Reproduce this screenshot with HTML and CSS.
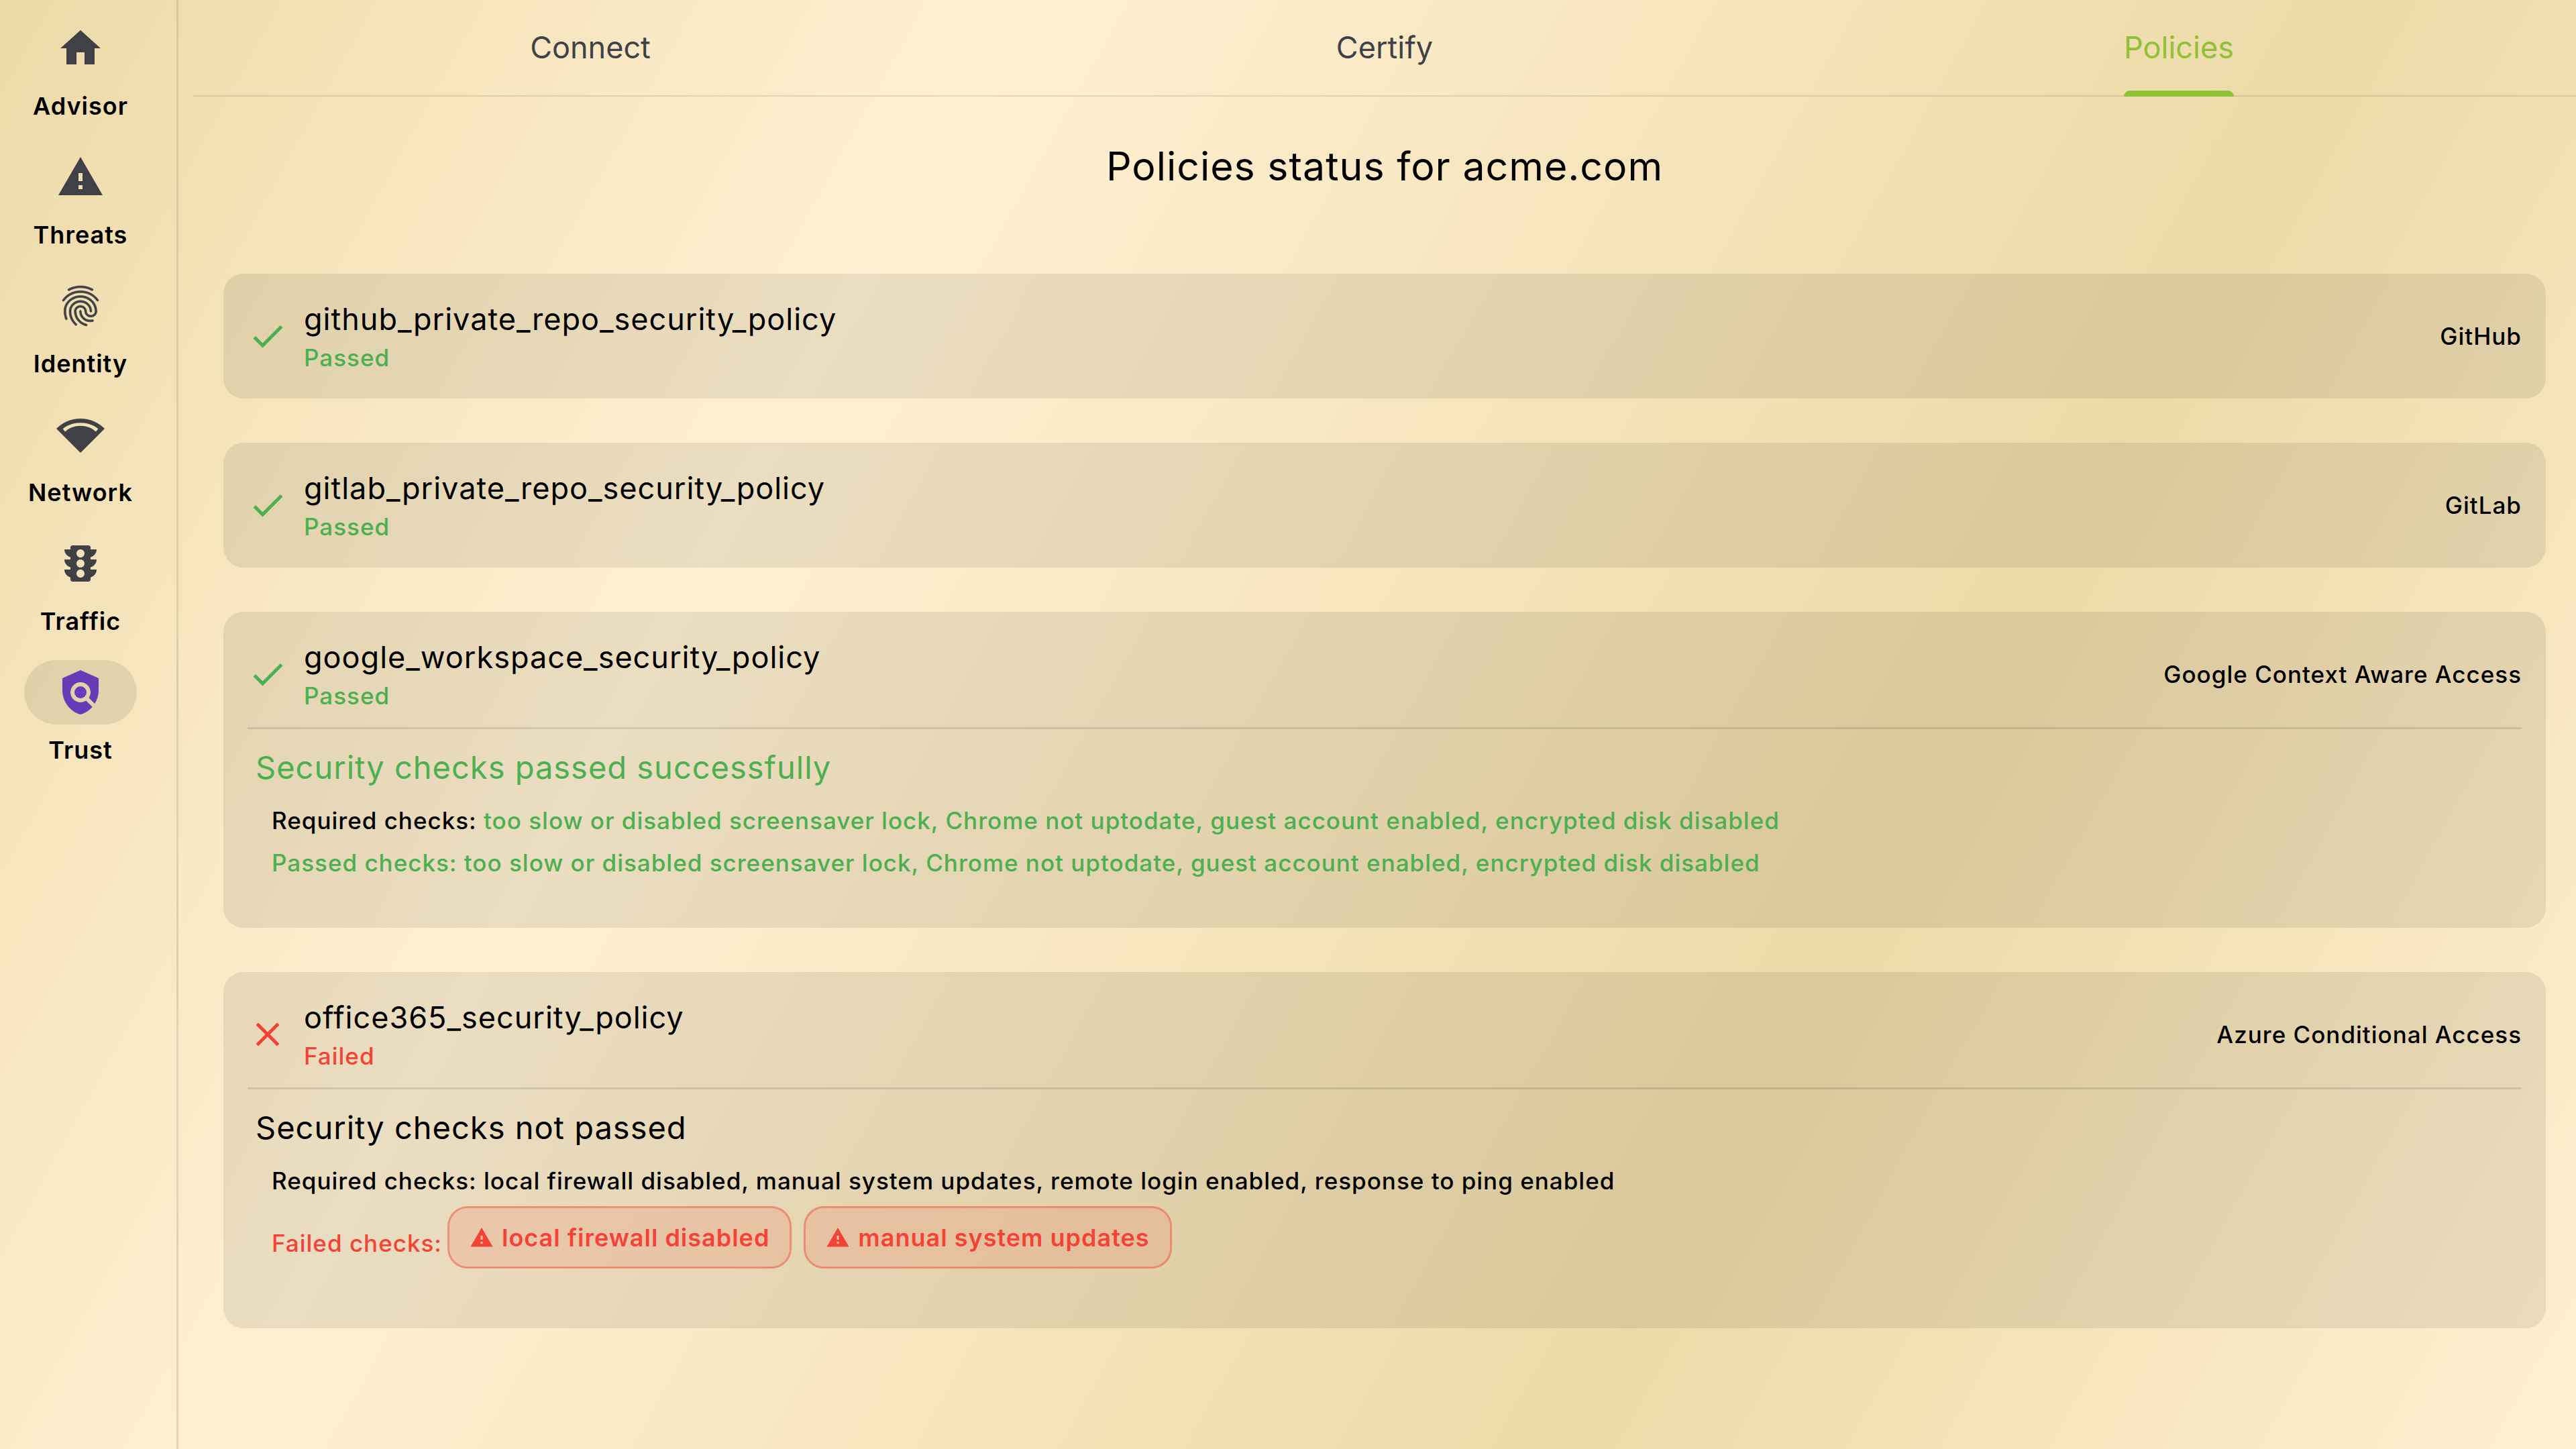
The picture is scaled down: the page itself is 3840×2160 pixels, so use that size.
FILE: index.html
```html
<!DOCTYPE html>
<html lang="en">
<head>
<meta charset="utf-8">
<title>Policies status</title>
<meta name="viewport" content="width=device-width, initial-scale=1">
<link rel="stylesheet" href="styles.css">
</head>
<body>
<svg class="sprite" aria-hidden="true">
  <symbol id="icon-check" viewBox="0 0 24 24"><path d="M9 16.17L4.83 12l-1.42 1.41L9 19 21 7l-1.41-1.41z"/></symbol>
  <symbol id="icon-close" viewBox="0 0 24 24"><path d="M19 6.41L17.59 5 12 10.59 6.41 5 5 6.41 10.59 12 5 17.59 6.41 19 12 13.41 17.59 19 19 17.59 13.41 12z"/></symbol>
  <symbol id="icon-warning" viewBox="0 0 24 24"><path d="M1 21h22L12 2 1 21zm12-3h-2v-2h2v2zm0-4h-2v-4h2v4z"/></symbol>
</svg>
<div class="app">
  <nav class="rail" aria-label="Main">
    <a class="rail-item" href="#advisor">
      <span class="rail-pill"><svg class="rail-icon" viewBox="0 0 24 24"><path d="M10 20v-6h4v6h5v-8h3L12 3 2 12h3v8z"/></svg></span>
      <span class="rail-label">Advisor</span>
    </a>
    <a class="rail-item" href="#threats">
      <span class="rail-pill"><svg class="rail-icon"><use href="#icon-warning"/></svg></span>
      <span class="rail-label">Threats</span>
    </a>
    <a class="rail-item" href="#identity">
      <span class="rail-pill"><svg class="rail-icon rail-icon-heavy" viewBox="0 0 24 24"><path d="M17.81 4.47c-.08 0-.16-.02-.23-.06C15.66 3.42 14 3 12.01 3c-1.98 0-3.86.47-5.57 1.41-.24.13-.54.04-.68-.2-.13-.24-.04-.55.2-.68C7.82 2.52 9.86 2 12.01 2c2.13 0 3.99.47 6.03 1.52.25.13.34.43.21.67-.09.18-.26.28-.44.28zM3.5 9.72c-.1 0-.2-.03-.29-.09-.23-.16-.28-.47-.12-.7.99-1.4 2.25-2.5 3.75-3.27C9.98 4.04 14 4.03 17.15 5.65c1.5.77 2.76 1.86 3.75 3.25.16.22.11.54-.12.7-.23.16-.54.11-.7-.12-.9-1.26-2.04-2.25-3.39-2.94-2.87-1.47-6.54-1.47-9.4.01-1.36.7-2.5 1.7-3.4 2.96-.08.14-.23.21-.39.21zm6.25 12.07c-.13 0-.26-.05-.35-.15-.87-.87-1.34-1.43-2.01-2.64-.69-1.23-1.05-2.73-1.05-4.34 0-2.97 2.54-5.39 5.66-5.39s5.66 2.42 5.66 5.39c0 .28-.22.5-.5.5s-.5-.22-.5-.5c0-2.42-2.09-4.39-4.66-4.39-2.57 0-4.66 1.97-4.66 4.39 0 1.44.32 2.77.93 3.85.64 1.15 1.08 1.64 1.85 2.42.19.2.19.51 0 .71-.11.1-.24.15-.37.15zm7.17-1.85c-1.19 0-2.24-.3-3.1-.89-1.49-1.01-2.38-2.65-2.38-4.39 0-.28.22-.5.5-.5s.5.22.5.5c0 1.41.72 2.74 1.94 3.56.71.48 1.54.71 2.54.71.24 0 .64-.03 1.04-.1.27-.05.53.13.58.41.05.27-.13.53-.41.58-.57.11-1.07.12-1.21.12zM14.91 22c-.04 0-.09-.01-.13-.02-1.59-.44-2.63-1.03-3.72-2.1-1.4-1.39-2.17-3.24-2.17-5.22 0-1.62 1.38-2.94 3.08-2.94 1.7 0 3.08 1.32 3.08 2.94 0 1.07.93 1.94 2.08 1.94s2.08-.87 2.08-1.94c0-3.77-3.25-6.83-7.25-6.83-2.84 0-5.44 1.58-6.61 4.03-.39.81-.59 1.76-.59 2.8 0 .78.07 2.01.67 3.61.1.26-.03.55-.29.64-.26.1-.55-.04-.64-.29-.49-1.31-.73-2.61-.73-3.96 0-1.2.23-2.29.68-3.24 1.33-2.79 4.28-4.6 7.51-4.6 4.55 0 8.25 3.51 8.25 7.83 0 1.62-1.38 2.94-3.08 2.94s-3.08-1.32-3.08-2.94c0-1.07-.93-1.94-2.08-1.94s-2.08.87-2.08 1.94c0 1.71.66 3.31 1.87 4.51.95.94 1.86 1.46 3.27 1.85.27.07.42.35.35.61-.05.23-.26.38-.47.38z"/></svg></span>
      <span class="rail-label">Identity</span>
    </a>
    <a class="rail-item" href="#network">
      <span class="rail-pill"><svg class="rail-icon" viewBox="0 0 24 24"><path fill-rule="evenodd" d="M12 4C7.31 4 3.07 5.9 0 8.98L12 21 24 8.98C20.93 5.9 16.69 4 12 4zM3.2 9.07C5.71 7.08 8.67 6.1 12 6.1s6.29.98 8.8 2.97l-1.15 1.43C17.5 8.54 14.86 7.6 12 7.600s-5.5.94-7.65 2.900z"/></svg></span>
      <span class="rail-label">Network</span>
    </a>
    <a class="rail-item" href="#traffic">
      <span class="rail-pill"><svg class="rail-icon" viewBox="0 0 24 24"><path d="M20 10h-3V8.860c1.720-.45 3-2 3-3.860h-3V4c0-.55-.45-1-1-1H8c-.55 0-1 .45-1 1v1H4c0 1.860 1.280 3.410 3 3.860V10H4c0 1.860 1.280 3.410 3 3.860V15H4c0 1.860 1.280 3.410 3 3.860V20c0 .55.45 1 1 1h8c.55 0 1-.45 1-1v-1.140c1.720-.45 3-2 3-3.860h-3v-1.140c1.720-.45 3-2 3-3.860zm-8 9c-1.110 0-2-.9-2-2s.89-2 2-2c1.100 0 2 .9 2 2s-.89 2-2 2zm0-5c-1.110 0-2-.9-2-2s.89-2 2-2c1.100 0 2 .9 2 2s-.89 2-2 2zm0-5c-1.110 0-2-.9-2-2 0-1.110.89-2 2-2 1.100 0 2 .89 2 2 0 1.100-.89 2-2 2z"/></svg></span>
      <span class="rail-label">Traffic</span>
    </a>
    <a class="rail-item is-active" href="#trust" aria-current="page">
      <span class="rail-pill"><svg class="rail-icon" viewBox="0 0 24 24"><path d="M21 5l-9-4-9 4v6c0 5.550 3.840 10.740 9 12 2.300-.56 4.330-1.900 5.880-3.710l-3.120-3.120c-1.940 1.290-4.580 1.070-6.290-.64-1.950-1.950-1.950-5.120 0-7.070 1.950-1.950 5.120-1.950 7.070 0 1.710 1.710 1.920 4.350.64 6.290l2.900 2.900C20.290 15.690 21 13.380 21 11V5z"/><circle cx="12" cy="12" r="3"/></svg></span>
      <span class="rail-label">Trust</span>
    </a>
  </nav>
  <main class="content">
    <div class="tabs" role="tablist">
      <button class="tab" type="button" role="tab" aria-selected="false"><span class="tab-label">Connect</span></button>
      <button class="tab" type="button" role="tab" aria-selected="false"><span class="tab-label">Certify</span></button>
      <button class="tab is-selected" type="button" role="tab" aria-selected="true"><span class="tab-label">Policies</span></button>
    </div>
    <h1 class="title">Policies status for acme.com</h1>
    <div class="cards">
      <article class="card">
        <header class="card-head">
          <svg class="status-icon passed"><use href="#icon-check"/></svg>
          <div class="card-text">
            <h2 class="card-name">github_private_repo_security_policy</h2>
            <p class="card-status passed">Passed</p>
          </div>
          <span class="provider">GitHub</span>
        </header>
      </article>
      <article class="card">
        <header class="card-head">
          <svg class="status-icon passed"><use href="#icon-check"/></svg>
          <div class="card-text">
            <h2 class="card-name">gitlab_private_repo_security_policy</h2>
            <p class="card-status passed">Passed</p>
          </div>
          <span class="provider">GitLab</span>
        </header>
      </article>
      <article class="card">
        <header class="card-head">
          <svg class="status-icon passed"><use href="#icon-check"/></svg>
          <div class="card-text">
            <h2 class="card-name">google_workspace_security_policy</h2>
            <p class="card-status passed">Passed</p>
          </div>
          <span class="provider">Google Context Aware Access</span>
        </header>
        <div class="details">
          <h3 class="details-title passed">Security checks passed successfully</h3>
          <p class="checks">Required checks: <span class="passed">too slow or disabled screensaver lock, Chrome not uptodate, guest account enabled, encrypted disk disabled</span></p>
          <p class="checks passed">Passed checks: too slow or disabled screensaver lock, Chrome not uptodate, guest account enabled, encrypted disk disabled</p>
        </div>
      </article>
      <article class="card">
        <header class="card-head">
          <svg class="status-icon failed"><use href="#icon-close"/></svg>
          <div class="card-text">
            <h2 class="card-name">office365_security_policy</h2>
            <p class="card-status failed">Failed</p>
          </div>
          <span class="provider">Azure Conditional Access</span>
        </header>
        <div class="details">
          <h3 class="details-title">Security checks not passed</h3>
          <p class="checks">Required checks: local firewall disabled, manual system updates, remote login enabled, response to ping enabled</p>
          <div class="failed-row failed">
            <span class="failed-label">Failed checks:</span>
            <div class="chips">
              <button class="chip" type="button"><svg class="chip-icon"><use href="#icon-warning"/></svg>local firewall disabled</button>
              <button class="chip" type="button"><svg class="chip-icon"><use href="#icon-warning"/></svg>manual system updates</button>
            </div>
          </div>
        </div>
      </article>
    </div>
  </main>
</div>
</body>
</html>
```
FILE: styles.css
```css
* {
  box-sizing: border-box;
}

body {
  margin: 0;
  font-family: Inter, "Liberation Sans", sans-serif;
  font-size: 35px;
  font-weight: 450;
  letter-spacing: 1px;
  color: #000;
}

h1, h2, h3, p {
  margin: 0;
}

h1, h2, h3 {
  font-weight: 400;
}

svg {
  display: block;
  flex: none;
  fill: currentColor;
}

.sprite {
  position: absolute;
  width: 0;
  height: 0;
}

.passed { color: #4caf50; }
.failed { color: #f44336; }

.app {
  display: flex;
  min-height: 100vh;
  background: linear-gradient(119deg, #eddaa8 0%, #fff0d2 30%, #eddaa8 70%, #fff0d2 100%);
}

/* Navigation rail */
.rail {
  display: flex;
  flex-direction: column;
  gap: 34px;
  width: 266px;
  flex: none;
  padding: 24px 23px 24px 0;
  border-right: 3px solid rgba(0, 0, 0, 0.1);
}

.rail-item {
  display: flex;
  flex-direction: column;
  align-items: center;
  gap: 14px;
  color: #000;
  text-decoration: none;
}

.rail-pill {
  display: flex;
  align-items: center;
  justify-content: center;
  width: 168px;
  height: 96px;
  border-radius: 48px;
  color: #404147;
}

.rail-icon {
  width: 72px;
  height: 72px;
}

.rail-icon-heavy {
  stroke: currentColor;
  stroke-width: 0.2;
}

.rail-label {
  font-size: 36px;
  font-weight: 600;
  line-height: 48px;
}

.is-active .rail-pill {
  background: rgba(0, 0, 0, 0.08);
  color: #673ab7;
}

/* Content */
.content {
  flex: 1;
  min-width: 0;
  padding-left: 22px;
}

.tabs {
  display: grid;
  grid-template-columns: repeat(3, 1fr);
  height: 144px;
  box-shadow: inset 0 -2px rgba(0, 0, 0, 0.1);
}

.tab {
  display: flex;
  justify-content: center;
  padding: 0;
  border: 0;
  background: none;
  font: inherit;
  font-size: 45px;
  font-weight: 400;
  letter-spacing: normal;
  color: #404147;
}

.tab-label {
  display: flex;
  align-items: center;
  height: 144px;
  padding-bottom: 3px;
  position: relative;
}

.tab.is-selected {
  color: #8ec136;
}

.is-selected .tab-label::after {
  content: "";
  position: absolute;
  left: 0;
  right: 0;
  bottom: 0;
  height: 9px;
  border-radius: 9px 9px 0 0;
  background: currentColor;
}

.title {
  margin-top: 68px;
  font-size: 59px;
  line-height: 72px;
  text-align: center;
}

.cards {
  display: flex;
  flex-direction: column;
  gap: 66px;
  margin-top: 124px;
  padding: 0 45px 66px;
}

.card {
  padding: 36px 36px 14px;
  border-radius: 30px;
  background: rgba(0, 0, 0, 0.08);
}

.card-head {
  display: flex;
  align-items: center;
  padding-bottom: 22px;
}

.status-icon {
  width: 60px;
  height: 60px;
}

.card-text {
  flex: 1;
  padding-left: 24px;
}

.card-name {
  font-size: 45px;
  line-height: 64px;
}

.card-status {
  line-height: 50px;
}

.details {
  padding: 27px 12px 51px;
  border-top: 3px solid rgba(0, 0, 0, 0.1);
}

.details-title {
  margin-bottom: 18px;
  font-size: 47px;
  line-height: 60px;
}

.checks {
  padding-left: 24px;
  line-height: 63px;
}

.failed-row {
  display: flex;
  align-items: center;
  gap: 8px;
  padding: 6px 0 24px 24px;
}

.failed-label {
  padding-top: 18px;
  line-height: 63px;
}

.chips {
  display: flex;
  gap: 18px;
}

.chip {
  display: flex;
  align-items: center;
  gap: 12px;
  height: 93px;
  padding: 0 30px;
  border: 3px solid rgba(244, 67, 54, 0.5);
  border-radius: 30px;
  background: rgba(244, 67, 54, 0.13);
  background-clip: padding-box;
  font: inherit;
  font-size: 36px;
  font-weight: 600;
  letter-spacing: 1px;
  color: #f44336;
}

.chip-icon {
  width: 36px;
  height: 36px;
}
```
